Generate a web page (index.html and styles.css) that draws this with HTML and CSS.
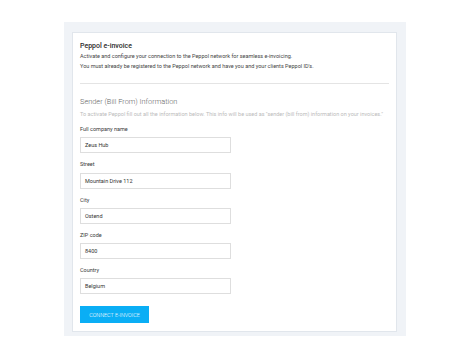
FILE: index.html
```html
<!DOCTYPE html>
<html>
<head>
<meta charset="utf-8">
<link rel="stylesheet" href="styles.css">
</head>
<body>
<div class="page">
  <div class="panel">
    <div class="card">
      <div class="title">Peppol e-invoice</div>
      <p class="desc">Activate and configure your connection to the Peppol network for seamless e-invoicing.<br>You must already be registered to the Peppol network and have you and your clients Peppol ID's.</p>
      <div class="rule"></div>
      <div class="heading">Sender (Bill From) Information</div>
      <p class="sub">To activate Peppol fill out all the information below. This info will be used as "sender (bill from) information on your invoices."</p>
      <div class="field">
        <label class="label">Full company name</label>
        <div class="input">Zeus Hub</div>
      </div>
      <div class="field">
        <label class="label">Street</label>
        <div class="input">Mountain Drive 112</div>
      </div>
      <div class="field">
        <label class="label">City</label>
        <div class="input">Ostend</div>
      </div>
      <div class="field">
        <label class="label">ZIP code</label>
        <div class="input">8400</div>
      </div>
      <div class="field">
        <label class="label">Country</label>
        <div class="input">Belgium</div>
      </div>
      <button class="btn">CONNECT E-INVOICE</button>
    </div>
  </div>
</div>
</body>
</html>
```
FILE: styles.css
```css
html, body {
  margin: 0;
  padding: 0;
  background: #fff;
  font-family: Roboto, "Liberation Sans", sans-serif;
}
.page {
  padding: 22px 0 0 64px;
}
.panel {
  width: 342px;
  box-sizing: border-box;
  background: #f0f3f7;
  padding: 10px 9px 4px 8px;
}
.card {
  background: #fff;
  border: 1px solid #e1e6ec;
  padding: 9px 7px 8px 7px;
}
.title {
  font-size: 7px;
  font-weight: 500;
  line-height: 9px;
  color: #2a2a2a;
}
.desc {
  margin: 0;
  font-size: 5.5px;
  line-height: 10px;
  color: #444;
}
.rule {
  height: 1px;
  background: #e4e4e4;
  margin: 12px 0 13px;
}
.heading {
  font-size: 7.4px;
  font-weight: 300;
  line-height: 10px;
  color: #666;
}
.sub {
  margin: 3px 0 7px;
  font-size: 5.5px;
  line-height: 8px;
  color: #bbb;
}
.field {
  margin-bottom: 7px;
}
.label {
  display: block;
  font-size: 5.5px;
  line-height: 9px;
  color: #3a3a3a;
  margin-bottom: 3.3px;
}
.input {
  width: 151px;
  height: 16px;
  box-sizing: border-box;
  border: 1px solid #dedede;
  padding: 0 4px;
  font-size: 5.5px;
  line-height: 14px;
  color: #333;
}
.btn {
  display: block;
  margin-top: 12px;
  width: 69px;
  height: 16.5px;
  padding: 0;
  border: none;
  background: #0aaef5;
  color: #fff;
  font-family: Roboto, "Liberation Sans", sans-serif;
  font-weight: 300;
  font-size: 5.4px;
}
```
